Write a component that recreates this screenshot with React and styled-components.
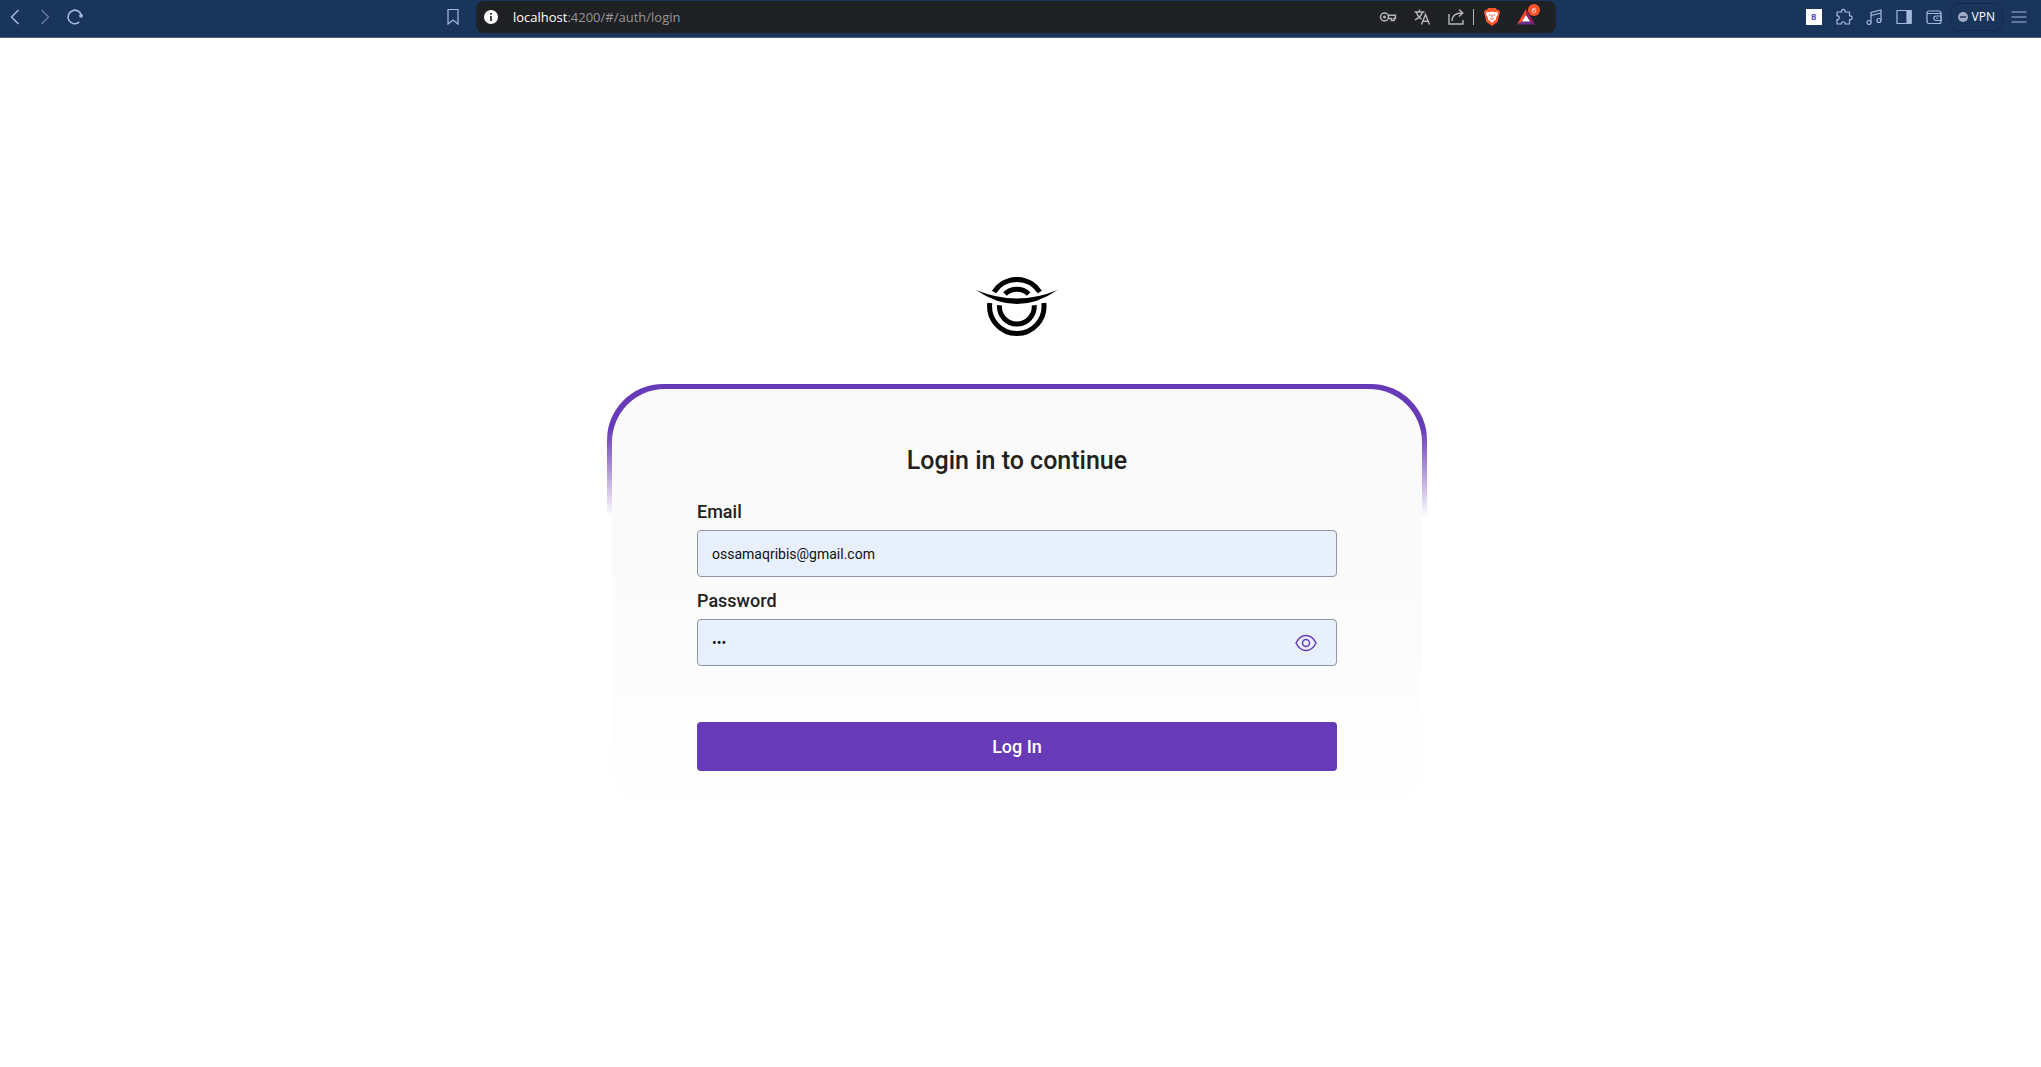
import React, { useState } from "react";
import styled, { createGlobalStyle } from "styled-components";

const GlobalStyle = createGlobalStyle`
  *, *::before, *::after { box-sizing: border-box; }
  body { margin: 0; background: #fff; color: #212121; font-family: Roboto, "Liberation Sans", sans-serif; }
  button, input { font: inherit; }
`;

const Screen = styled.div`
  min-height: 100vh;
  display: flex;
  flex-direction: column;
`;

const BrowserBar = styled.header`
  height: 38px;
  display: grid;
  grid-template-columns: 10fr 1115px 11fr;
  align-items: center;
  background: #1a355c;
  border-bottom: 1px solid #48607c;
  color: #a5badb;
  padding-bottom: 3px;
`;

const Nav = styled.nav`
  display: flex;
  gap: 6px;
  padding-left: 3px;
`;

const Middle = styled.div`
  display: flex;
  align-items: center;
  gap: 11px;
`;

const Tools = styled.div`
  display: flex;
  justify-content: flex-end;
  align-items: center;
  gap: 6px;
  padding-right: 10px;
`;

const IconButton = styled.button`
  display: grid;
  place-items: center;
  width: 24px;
  height: 24px;
  padding: 0;
  border: 0;
  background: none;
  color: inherit;
  opacity: ${(p) => (p.$dim ? 0.5 : 1)};
  cursor: pointer;
`;

const Address = styled.div`
  flex: 1;
  height: 32px;
  display: flex;
  align-items: center;
  gap: 10px;
  padding: 0 18px 0 3px;
  border-radius: 8px;
  background: #202124;
  color: #b4b6ba;
`;

const Url = styled.div`
  flex: 1;
  font: 13px/20px "Open Sans", "Noto Sans", sans-serif;
  color: #94979b;
  b { font-weight: 400; color: #fff; }
`;

const Divider = styled.span`
  width: 1px;
  height: 16px;
  margin: 0 -4px 0 -5px;
  background: #b4b6ba;
`;

const Rewards = styled.span`
  position: relative;
  display: grid;
`;

const Count = styled.span`
  position: absolute;
  top: -1px;
  right: -2px;
  width: 12px;
  height: 12px;
  border-radius: 50%;
  background: #fb542b;
  color: #fff;
  font: 8px/12px "Open Sans", sans-serif;
  text-align: center;
`;

const Extension = styled.button`
  width: 16px;
  height: 16px;
  margin: 0 4px;
  padding: 0;
  border: 0;
  background: #fff;
  color: #5b4fc0;
  font: 700 8px/16px "Open Sans", sans-serif;
`;

const Vpn = styled.button`
  display: flex;
  align-items: center;
  gap: 4px;
  height: 28px;
  margin: 0 -2px;
  padding: 0 7px;
  border: 1px solid #152a49;
  border-radius: 9px;
  background: none;
  color: #fff;
  font: 12px/16px "Open Sans", "Noto Sans", sans-serif;
`;

const Page = styled.main`
  flex: 1;
  display: flex;
  flex-direction: column;
  align-items: center;
  justify-content: center;
  padding-right: 7px;
`;

const Logo = styled.svg`
  width: 82px;
  height: 62px;
  margin-bottom: 45px;
`;

const Frame = styled.div`
  width: 820px;
  max-width: 100%;
  padding: 5px;
  border-radius: 56px;
  background: linear-gradient(180deg, #673ab7 10%, rgba(103, 58, 183, 0) 30%);
`;

const Card = styled.form`
  display: flex;
  flex-direction: column;
  padding: 56px 85px 52px;
  border-radius: 53px;
  background: linear-gradient(180deg, #fafafa 38%, #fff 100%);
`;

const Title = styled.h1`
  margin: 0 0 26px;
  font-size: 25px;
  line-height: 31px;
  font-weight: 500;
  text-align: center;
`;

const Label = styled.label`
  margin-bottom: 8px;
  font-size: 18px;
  line-height: 20px;
  font-weight: 500;
`;

const Field = styled.div`
  display: flex;
  align-items: center;
  height: 47px;
  margin-bottom: ${(p) => (p.$last ? 56 : 14)}px;
  padding: 0 18px 0 14px;
  border: 1px solid #8e95a3;
  border-radius: 4px;
  background: #e8f0fe;
  color: #673ab7;
`;

const Input = styled.input`
  flex: 1;
  min-width: 0;
  padding: 0;
  border: 0;
  outline: 0;
  background: none;
  color: #111;
  font-size: 14px;
  line-height: 20px;
`;

const Submit = styled.button`
  height: 49px;
  border: 0;
  border-radius: 4px;
  background: #673ab7;
  color: #fff;
  font-size: 18px;
  font-weight: 500;
  cursor: pointer;
`;

const Glyph = ({ size = 18, width = 1.2, children }) => (
  <svg width={size} height={size} viewBox="0 0 18 18" fill="none" stroke="currentColor" strokeWidth={width} aria-hidden="true">
    {children}
  </svg>
);

const HatLogo = () => (
  <Logo viewBox="0 0 82 62" role="img" aria-label="Logo">
    <g fill="none" stroke="#000" strokeWidth="5">
      <path d="M18 15A27.2 27.2 0 0 1 63.800 15" />
      <path d="M29 17A17.4 17.4 0 0 1 52.700 17" />
      <path d="M13.800 26A27.2 27.2 0 1 0 67.800 26" />
      <path d="M23.500 28.300A17.4 17.4 0 1 0 58.200 28.300" />
    </g>
    <path d="M0 13Q41 30 81.500 13Q41 41 0 13Z" fill="#000" />
  </Logo>
);

export default function App() {
  const [visible, setVisible] = useState(false);
  return (
    <Screen>
      <GlobalStyle />
      <BrowserBar>
        <Nav aria-label="Browser">
          <IconButton aria-label="Back"><Glyph width={1.5}><path d="M12.5 2L5.5 9l7 7" /></Glyph></IconButton>
          <IconButton aria-label="Forward" $dim><Glyph width={1.5}><path d="M5.5 2l7 7-7 7" /></Glyph></IconButton>
          <IconButton aria-label="Reload">
            <Glyph width={1.6}><path d="M13.2 14.2A6.8 6.8 0 1 1 15.5 7.5" /><circle cx="15" cy="7.8" r="1.9" fill="currentColor" stroke="none" /></Glyph>
          </IconButton>
        </Nav>
        <Middle>
          <IconButton aria-label="Bookmark"><Glyph><path d="M4 1.5h10v14.5l-5-4-5 4z" /></Glyph></IconButton>
          <Address>
            <IconButton aria-label="Site information">
              <svg width="14" height="14" viewBox="0 0 14 14"><circle cx="7" cy="7" r="7" fill="#fff" /><path d="M7 3v1.7M7 6v5" stroke="#202124" strokeWidth="1.7" /></svg>
            </IconButton>
            <Url><b>localhost</b>:4200/#/auth/login</Url>
            <IconButton aria-label="Passwords">
              <Glyph width={1.5}><circle cx="5.500" cy="9" r="4" /><circle cx="5.500" cy="9" r="0.800" /><path d="M9 7.200h7.400v3.400h-1.400v2h-2.500v-2H9" /></Glyph>
            </IconButton>
            <IconButton aria-label="Translate">
              <Glyph width={1.4}><path d="M1.500 4h10M6.500 1.500v2.500M3.500 4c1 4 3 6 5 7M9.500 4c-1 4-4 6-7.500 8M8.500 16.500l4-10 4 10M10 13.200h5" /></Glyph>
            </IconButton>
            <IconButton aria-label="Share">
              <Glyph width={1.4}><path d="M2 6v10h14v-4M5 13c0-5 3-8 10-8M12 1.5L15.800 5 12 8.500" /></Glyph>
            </IconButton>
            <Divider />
            <IconButton aria-label="Brave Shields">
              <svg width="16" height="18" viewBox="0 0 17 19">
                <path d="M4.5 0h8l1.500 2 2-.2 1 3-.8 2.200-1.600 7.500L8.500 19l-6.100-4.500L.8 7 0 4.800l1-3L3 2z" fill="#fb542b" />
                <path d="M3 4l3 .5 2.500-.8 2.500.8 3-.5 1 2.500-2.500 4 .5 1.500-2 1.500-2.500 2-2.500-2-2-1.500.5-1.500L2 6.500z" fill="#fff" />
                <path d="M5 7l2 .8M12 7l-2 .8M8.500 7v3M6.500 11l2 1 2-1" stroke="#fb542b" fill="none" />
              </svg>
            </IconButton>
            <IconButton aria-label="Rewards">
              <Rewards>
                <svg width="24" height="24" viewBox="0 0 24 24">
                  <path d="M12 4L3 19.500l5-2.500 4-7z" fill="#ff4724" /><path d="M12 4l9 15.500-5-2.500-4-7z" fill="#9e1f63" /><path d="M3 19.500h18L16 16.500H8z" fill="#662d91" /><path d="M12 10l4 6.500H8z" fill="#fff" />
                </svg>
                <Count>6</Count>
              </Rewards>
            </IconButton>
          </Address>
        </Middle>
        <Tools>
          <Extension aria-label="Extension B">B</Extension>
          <IconButton aria-label="Extensions">
            <Glyph><path d="M2 4h4.500c-1-3.500 4.500-3.500 3.500 0h4.500v4c3.500-1 3.500 4.500 0 3.500v4.500H10c1-3-4.500-3-3.500 0H2v-4.500c3 1 3-4.500 0-3.500z" strokeLinejoin="round" /></Glyph>
          </IconButton>
          <IconButton aria-label="Media">
            <Glyph><path d="M6 14.500V4.500L16 2v10.500M6 7.500L16 5" /><circle cx="4" cy="14.500" r="2" /><circle cx="14" cy="12.500" r="2" /></Glyph>
          </IconButton>
          <IconButton aria-label="Sidebar">
            <Glyph><path d="M2 2.500h14v13H2z" /><path d="M12 3h4v12h-4z" fill="currentColor" /></Glyph>
          </IconButton>
          <IconButton aria-label="Wallet">
            <Glyph><rect x="2" y="3" width="14" height="12.500" rx="2" /><path d="M2 5.500h14M16 8h-5a2 2 0 0 0 0 4.500h5z" /><path d="M12 9.500v1.500" /></Glyph>
          </IconButton>
          <Vpn>
            <svg width="10" height="10" viewBox="0 0 10 10"><circle cx="5" cy="5" r="5" fill="#a2a9c4" /><path d="M2 5h6" stroke="#1a355c" strokeWidth="1.500" /></svg>
            VPN
          </Vpn>
          <IconButton aria-label="Menu"><Glyph><path d="M1.500 4h15M1.500 9h15M1.500 14h15" /></Glyph></IconButton>
        </Tools>
      </BrowserBar>
      <Page>
        <HatLogo />
        <Frame>
          <Card onSubmit={(e) => e.preventDefault()}>
            <Title>Login in to continue</Title>
            <Label htmlFor="email">Email</Label>
            <Field><Input id="email" type="email" defaultValue="ossamaqribis@gmail.com" /></Field>
            <Label htmlFor="password">Password</Label>
            <Field $last>
              <Input id="password" type={visible ? "text" : "password"} defaultValue="123" />
              <IconButton type="button" aria-label="Show password" onClick={() => setVisible(!visible)}>
                <svg width="22" height="18" viewBox="0 0 22 18" fill="none" stroke="currentColor" strokeWidth="1.500"><path d="M1 9C3.500 4 7 1.500 11 1.500S18.500 4 21 9C18.500 14 15 16.500 11 16.500S3.500 14 1 9z" /><circle cx="11" cy="9" r="3.500" /></svg>
              </IconButton>
            </Field>
            <Submit type="submit">Log In</Submit>
          </Card>
        </Frame>
      </Page>
    </Screen>
  );
}
